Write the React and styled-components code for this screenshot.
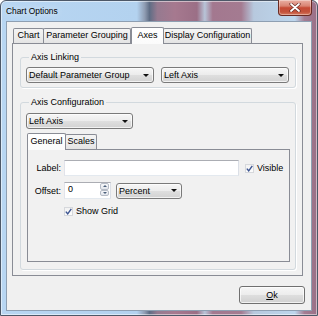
import React from "react";
import styled, { createGlobalStyle } from "styled-components";

const Global = createGlobalStyle`
  html, body { margin: 0; padding: 0; background: #ffffff; }
  body { font-family: "Liberation Sans", Arial, sans-serif; color: #000; }
  * { box-sizing: border-box; }
`;

const Frame = styled.div`
  width: 318px;
  height: 316px;
  border: 1px solid #4d5868;
  border-radius: 6px 6px 0 0;
  padding: 0 5px 4px 5px;
  display: flex;
  flex-direction: column;
  background: linear-gradient(
    90deg,
    #b8d6f2 0%,
    #b3d2ef 43%,
    #8f9cb2 45.5%,
    #5f6d85 47%,
    #967a90 49.5%,
    #a6798f 55%,
    #9b6f86 62%,
    #b8c4d8 64.5%,
    #a3788f 67%,
    #a47b91 76%,
    #b7c9de 80%,
    #bdd6ed 93%,
    #a47d93 96%,
    #9a6f87 100%
  );
  box-shadow: inset 0 0 0 1px rgba(255, 255, 255, 0.5);
`;

const TitleBar = styled.div`
  height: 20px;
  display: flex;
  align-items: center;
  justify-content: space-between;
`;

const Title = styled.div`
  font-size: 8.4px;
  line-height: 11px;
  color: #000;
  text-shadow: 0 0 6px rgba(255, 255, 255, 0.9);
`;

const CloseButton = styled.div`
  align-self: flex-start;
  width: 34px;
  height: 16px;
  margin-top: -1px;
  border: 1px solid #6a2a22;
  border-top: none;
  border-radius: 0 0 4px 4px;
  background: linear-gradient(#eab0a4 0%, #d98473 40%, #c64a35 52%, #c3533c 80%, #d77c62 100%);
  box-shadow: inset 0 0 0 1px rgba(255, 255, 255, 0.35);
  display: flex;
  align-items: center;
  justify-content: center;
`;

const Client = styled.div`
  flex: 1;
  background: #f0f0f0;
  border: 1px solid #8e9fb2;
  padding: 5px 6px 6px 5px;
  display: flex;
  flex-direction: column;
`;

const TabControl = styled.div`
  display: flex;
  flex-direction: column;
  width: ${(p) => p.$w}px;
  flex: ${(p) => (p.$grow ? 1 : "none")};
  margin-top: ${(p) => p.$mt || 0}px;
  margin-left: ${(p) => p.$ml || 0}px;
`;

const TabStrip = styled.div`
  display: flex;
  align-items: flex-end;
  height: 16px;
  padding-left: ${(p) => p.$pl || 0}px;
`;

const Tab = styled.div`
  position: relative;
  z-index: ${(p) => (p.$active ? 2 : 1)};
  width: ${(p) => p.$w}px;
  height: ${(p) => (p.$active ? 17 : p.$short ? 14 : 15)}px;
  margin-left: ${(p) => p.$ml || 0}px;
  margin-bottom: ${(p) => (p.$active ? -1 : 0)}px;
  border: 1px solid #898c95;
  border-bottom: none;
  border-radius: 2px 2px 0 0;
  background: ${(p) =>
    p.$active ? "linear-gradient(#ffffff, #fbfbfb)" : "linear-gradient(#f4f4f4 0%, #ededed 50%, #e4e4e4 100%)"};
  font-size: 9px;
  line-height: ${(p) => (p.$active ? 14 : 12)}px;
  text-align: center;
  white-space: nowrap;
`;

const TabPanel = styled.div`
  flex: 1;
  border: 1px solid #898c95;
  background: #f1f1f1;
  display: flex;
  flex-direction: column;
  padding: ${(p) => p.$pad};
`;

const Group = styled.fieldset`
  margin: ${(p) => p.$mt || 0}px 0 0 0;
  padding: ${(p) => p.$pad};
  border: 1px solid #d2d9de;
  border-radius: 3px;
  box-shadow: 1px 1px 0 #ffffff;
  min-width: 0;
  flex: ${(p) => (p.$grow ? 1 : "none")};
  display: flex;
  flex-direction: column;
`;

const Legend = styled.legend`
  font-size: 9px;
  line-height: 11px;
  padding: 0 2px;
  margin-left: 3px;
`;

const Row = styled.div`
  display: flex;
  align-items: center;
  gap: ${(p) => p.$gap || 0}px;
  margin-top: ${(p) => p.$mt || 0}px;
  padding-left: ${(p) => p.$pl || 0}px;
`;

const Combo = styled.div`
  width: ${(p) => p.$w}px;
  height: 16px;
  border: 1px solid #7a7a7a;
  border-radius: 3px;
  background: linear-gradient(#f6f6f6 0%, #ececec 50%, #dfdfdf 51%, #d2d2d2 100%);
  box-shadow: inset 0 0 0 1px rgba(255, 255, 255, 0.7);
  display: flex;
  align-items: center;
  justify-content: space-between;
  padding: 0 4px 0 2px;
  font-size: 9px;
  white-space: nowrap;
`;

const Arrow = styled.span`
  width: 0;
  height: 0;
  border-left: 3px solid transparent;
  border-right: 3px solid transparent;
  border-top: 3px solid #111;
`;

const FieldLabel = styled.span`
  width: 33px;
  margin-right: 3px;
  text-align: right;
  font-size: 9px;
`;

const TextBox = styled.div`
  width: ${(p) => p.$w}px;
  height: ${(p) => p.$h || 16}px;
  background: #fff;
  border: 1px solid #abadb3;
  border-color: #abadb3 #dbdfe6 #e3e9ef #e2e3ea;
  font-size: 9px;
  padding: 1px 0 0 3px;
  display: flex;
  align-items: flex-start;
`;

const SpinBox = styled(TextBox)`
  position: relative;
  justify-content: space-between;
  padding: 1px 1px 1px 3px;
`;

const SpinButtons = styled.div`
  display: flex;
  flex-direction: column;
  width: 9px;
  height: 100%;
  margin-top: -1px;
`;

const SpinHalf = styled.div`
  flex: 1;
  border: 1px solid #b6bcc6;
  border-radius: 2px;
  background: linear-gradient(#f7f8fa, #e2e6ec);
  display: flex;
  align-items: center;
  justify-content: center;
`;

const SpinArrow = styled.span`
  width: 0;
  height: 0;
  border-left: 2px solid transparent;
  border-right: 2px solid transparent;
  ${(p) => (p.$up ? "border-bottom: 2px solid #4c607a;" : "border-top: 2px solid #4c607a;")}
`;

const Check = styled.label`
  display: flex;
  align-items: center;
  gap: 3px;
  font-size: 9px;
`;

const CheckBoxMark = styled.span`
  width: 9px;
  height: 9px;
  border: 1px solid #d6d8dc;
  background: linear-gradient(#f2f2f2, #fcfcfc);
  display: inline-flex;
  align-items: center;
  justify-content: center;
`;

const ButtonRow = styled.div`
  display: flex;
  justify-content: flex-end;
  margin-top: 10px;
`;

const Button = styled.div`
  width: 66px;
  height: 18px;
  border: 1px solid #707070;
  border-radius: 3px;
  background: linear-gradient(#f6f6f6 0%, #ececec 50%, #dedede 51%, #d0d0d0 100%);
  box-shadow: inset 0 0 0 1px rgba(255, 255, 255, 0.7);
  font-size: 9px;
  display: flex;
  align-items: center;
  justify-content: center;
  u { text-decoration: underline; }
`;

const CheckIcon = () => (
  <svg width="7" height="7" viewBox="0 0 7 7">
    <path d="M0.8 3.6 L2.7 5.8 L6.3 0.8" fill="none" stroke="#3d5591" strokeWidth="1.4" />
  </svg>
);

const CloseIcon = () => (
  <svg width="12" height="9" viewBox="0 0 12 9">
    <path d="M2 1 L10 8 M10 1 L2 8" stroke="#6b2b25" strokeWidth="3.2" strokeLinecap="round" />
    <path d="M2 1 L10 8 M10 1 L2 8" stroke="#ffffff" strokeWidth="1.8" strokeLinecap="round" />
  </svg>
);

const CheckField = ({ children }) => (
  <Check>
    <CheckBoxMark>
      <CheckIcon />
    </CheckBoxMark>
    {children}
  </Check>
);

export default function App() {
  return (
    <>
      <Global />
      <Frame>
        <TitleBar>
          <Title>Chart Options</Title>
          <CloseButton>
            <CloseIcon />
          </CloseButton>
        </TitleBar>
        <Client>
          <TabControl $w={291} $grow>
            <TabStrip $pl={1}>
              <Tab $w={31}>Chart</Tab>
              <Tab $w={88} $ml={-1}>Parameter Grouping</Tab>
              <Tab $w={33} $active>Axes</Tab>
              <Tab $w={89} $ml={-1}>Display Configuration</Tab>
            </TabStrip>
            <TabPanel $pad="8px 6px 5px 7px">
              <Group $pad="4px 5px 4px 5px">
                <Legend>Axis Linking</Legend>
                <Row $gap={7}>
                  <Combo $w={128}>
                    Default Parameter Group
                    <Arrow />
                  </Combo>
                  <Combo $w={128}>
                    Left Axis
                    <Arrow />
                  </Combo>
                </Row>
              </Group>
              <Group $mt={9} $pad="5px 5px 7px 5px" $grow>
                <Legend>Axis Configuration</Legend>
                <Combo $w={107}>
                  Left Axis
                  <Arrow />
                </Combo>
                <TabControl $w={263} $grow $mt={4} $ml={1}>
                  <TabStrip>
                    <Tab $w={39} $active>General</Tab>
                    <Tab $w={32} $ml={-1}>Scales</Tab>
                  </TabStrip>
                  <TabPanel $pad="10px 0 0 0">
                    <Row>
                      <FieldLabel>Label:</FieldLabel>
                      <TextBox $w={175} />
                      <Row $pl={6}>
                        <CheckField>Visible</CheckField>
                      </Row>
                    </Row>
                    <Row $mt={6}>
                      <FieldLabel>Offset:</FieldLabel>
                      <SpinBox $w={47} $h={17}>
                        0
                        <SpinButtons>
                          <SpinHalf>
                            <SpinArrow $up />
                          </SpinHalf>
                          <SpinHalf>
                            <SpinArrow />
                          </SpinHalf>
                        </SpinButtons>
                      </SpinBox>
                      <Row $pl={5}>
                        <Combo $w={66}>
                          Percent
                          <Arrow />
                        </Combo>
                      </Row>
                    </Row>
                    <Row $mt={7} $pl={36}>
                      <CheckField>Show Grid</CheckField>
                    </Row>
                  </TabPanel>
                </TabControl>
              </Group>
            </TabPanel>
          </TabControl>
          <ButtonRow>
            <Button>
              <span>
                <u>O</u>k
              </span>
            </Button>
          </ButtonRow>
        </Client>
      </Frame>
    </>
  );
}
